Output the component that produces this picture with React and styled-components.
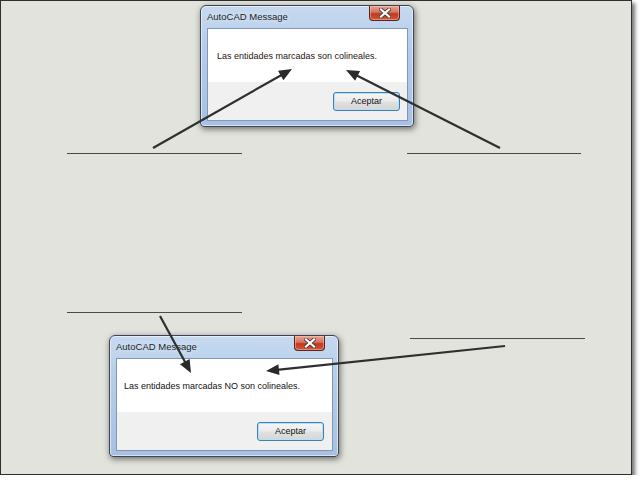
import React from "react";
import styled, { createGlobalStyle } from "styled-components";

const Global = createGlobalStyle`
  html, body { margin: 0; padding: 0; background: #ffffff; }
  body { font-family: "Liberation Sans", Arial, sans-serif; }
`;

const Canvas = styled.div`
  position: relative;
  width: 630px;
  height: 473px;
  background: #e3e3dd;
  border: 1px solid #2e2e2e;
  box-shadow: 3px 3px 4px rgba(0, 0, 0, 0.55);
`;

const Window = styled.div`
  position: absolute;
  left: ${(p) => p.$x}px;
  top: ${(p) => p.$y}px;
  width: ${(p) => p.$w}px;
  box-sizing: border-box;
  display: flex;
  flex-direction: column;
  padding: 0 5px 5px 6px;
  border: 1px solid #3e4654;
  border-radius: 6px 6px 4px 4px;
  background: linear-gradient(180deg, #c6d9f0 0%, #b5cdea 35%, #a6c1e3 100%);
  box-shadow: inset 0 0 0 1px rgba(255, 255, 255, 0.55), 1px 2px 6px rgba(0, 0, 0, 0.55);
`;

const TitleBar = styled.div`
  height: 22px;
  display: flex;
  align-items: flex-start;
`;

const Title = styled.div`
  flex: 1;
  font-size: 9.5px;
  line-height: 22px;
  color: #1d1d1d;
  text-shadow: 0 0 6px rgba(255, 255, 255, 0.9);
`;

const CloseButton = styled.div`
  width: 31px;
  height: 15px;
  margin-right: ${(p) => p.$mr}px;
  box-sizing: border-box;
  border: 1px solid #5a2219;
  border-top: none;
  border-radius: 0 0 4px 4px;
  background: linear-gradient(180deg, #e8a493 0%, #d4715c 45%, #c1391f 55%, #d0583a 100%);
  box-shadow: inset 0 0 0 1px rgba(255, 210, 200, 0.45);
  display: flex;
  align-items: center;
  justify-content: center;
`;

const Client = styled.div`
  display: flex;
  flex-direction: column;
  border: 1px solid #8297b6;
  background: #f0f0f0;
`;

const MessageArea = styled.div`
  height: 53px;
  background: #ffffff;
  display: flex;
  align-items: center;
  padding-left: ${(p) => p.$pl}px;
  font-size: 9px;
  color: ${(p) => p.$color};
`;

const ButtonArea = styled.div`
  height: 38px;
  display: flex;
  align-items: center;
  justify-content: flex-end;
  padding-right: ${(p) => p.$pr}px;
`;

const Button = styled.div`
  width: 67px;
  height: 19px;
  box-sizing: border-box;
  border: 1px solid #3c7fb1;
  border-radius: 3px;
  background: linear-gradient(180deg, #f5f5f5 0%, #ececec 45%, #e0e0e0 55%, #d6d6d6 100%);
  box-shadow: inset 0 0 0 1px #b8e0f5;
  display: flex;
  align-items: center;
  justify-content: center;
  font-size: 9px;
  color: #111;
`;

const Overlay = styled.svg`
  position: absolute;
  left: -1px;
  top: -1px;
  pointer-events: none;
`;

function CloseGlyph() {
  return (
    <svg width="12" height="10" viewBox="0 0 12 10">
      <path
        d="M2 1.5 L10 8.5 M10 1.5 L2 8.5"
        stroke="#4a3a36"
        strokeWidth="3.8"
        strokeLinecap="square"
      />
      <path
        d="M2 1.5 L10 8.5 M10 1.5 L2 8.5"
        stroke="#ffffff"
        strokeWidth="2.2"
        strokeLinecap="square"
      />
    </svg>
  );
}

function Dialog({ x, y, w, text, textPl, btnPr, closeMr, color }) {
  return (
    <Window $x={x} $y={y} $w={w}>
      <TitleBar>
        <Title>AutoCAD Message</Title>
        <CloseButton $mr={closeMr}>
          <CloseGlyph />
        </CloseButton>
      </TitleBar>
      <Client>
        <MessageArea $pl={textPl} $color={color}>{text}</MessageArea>
        <ButtonArea $pr={btnPr}>
          <Button>Aceptar</Button>
        </ButtonArea>
      </Client>
    </Window>
  );
}

function Arrow({ x1, y1, x2, y2 }) {
  const dx = x2 - x1;
  const dy = y2 - y1;
  const len = Math.hypot(dx, dy);
  const ux = dx / len;
  const uy = dy / len;
  const hl = 13;
  const hw = 5.5;
  const bx = x2 - ux * hl;
  const by = y2 - uy * hl;
  const px = -uy * hw;
  const py = ux * hw;
  const pts = `${x2},${y2} ${bx + px},${by + py} ${bx - px},${by - py}`;
  return (
    <g>
      <line x1={x1} y1={y1} x2={bx + ux * 2} y2={by + uy * 2} stroke="#2f2f2f" strokeWidth="2.2" />
      <polygon points={pts} fill="#2a2a2a" />
    </g>
  );
}

const lines = [
  { x1: 67, x2: 242, y: 153.5 },
  { x1: 407, x2: 581, y: 153.5 },
  { x1: 67, x2: 242, y: 312.5 },
  { x1: 410, x2: 585, y: 338.5 },
];

export default function App() {
  return (
    <>
      <Global />
      <Canvas>
        <Dialog
          x={199}
          y={4}
          w={214}
          text="Las entidades marcadas son colineales."
          textPl={9}
          btnPr={7}
          closeMr={8}
          color="#2a1410"
        />
        <Dialog
          x={108}
          y={334}
          w={230}
          text="Las entidades marcadas NO son colineales."
          textPl={7}
          btnPr={8}
          closeMr={8}
          color="#111"
        />
        <Overlay width="640" height="483" viewBox="0 0 640 483">
          {lines.map((l, i) => (
            <line key={i} x1={l.x1} x2={l.x2} y1={l.y} y2={l.y} stroke="#4a4a4a" strokeWidth="1" />
          ))}
          <Arrow x1={153} y1={148} x2={292} y2={69} />
          <Arrow x1={500} y1={148} x2={346} y2={70} />
          <Arrow x1={160} y1={316} x2={191} y2={373} />
          <Arrow x1={505} y1={346} x2={266} y2={371} />
        </Overlay>
      </Canvas>
    </>
  );
}
